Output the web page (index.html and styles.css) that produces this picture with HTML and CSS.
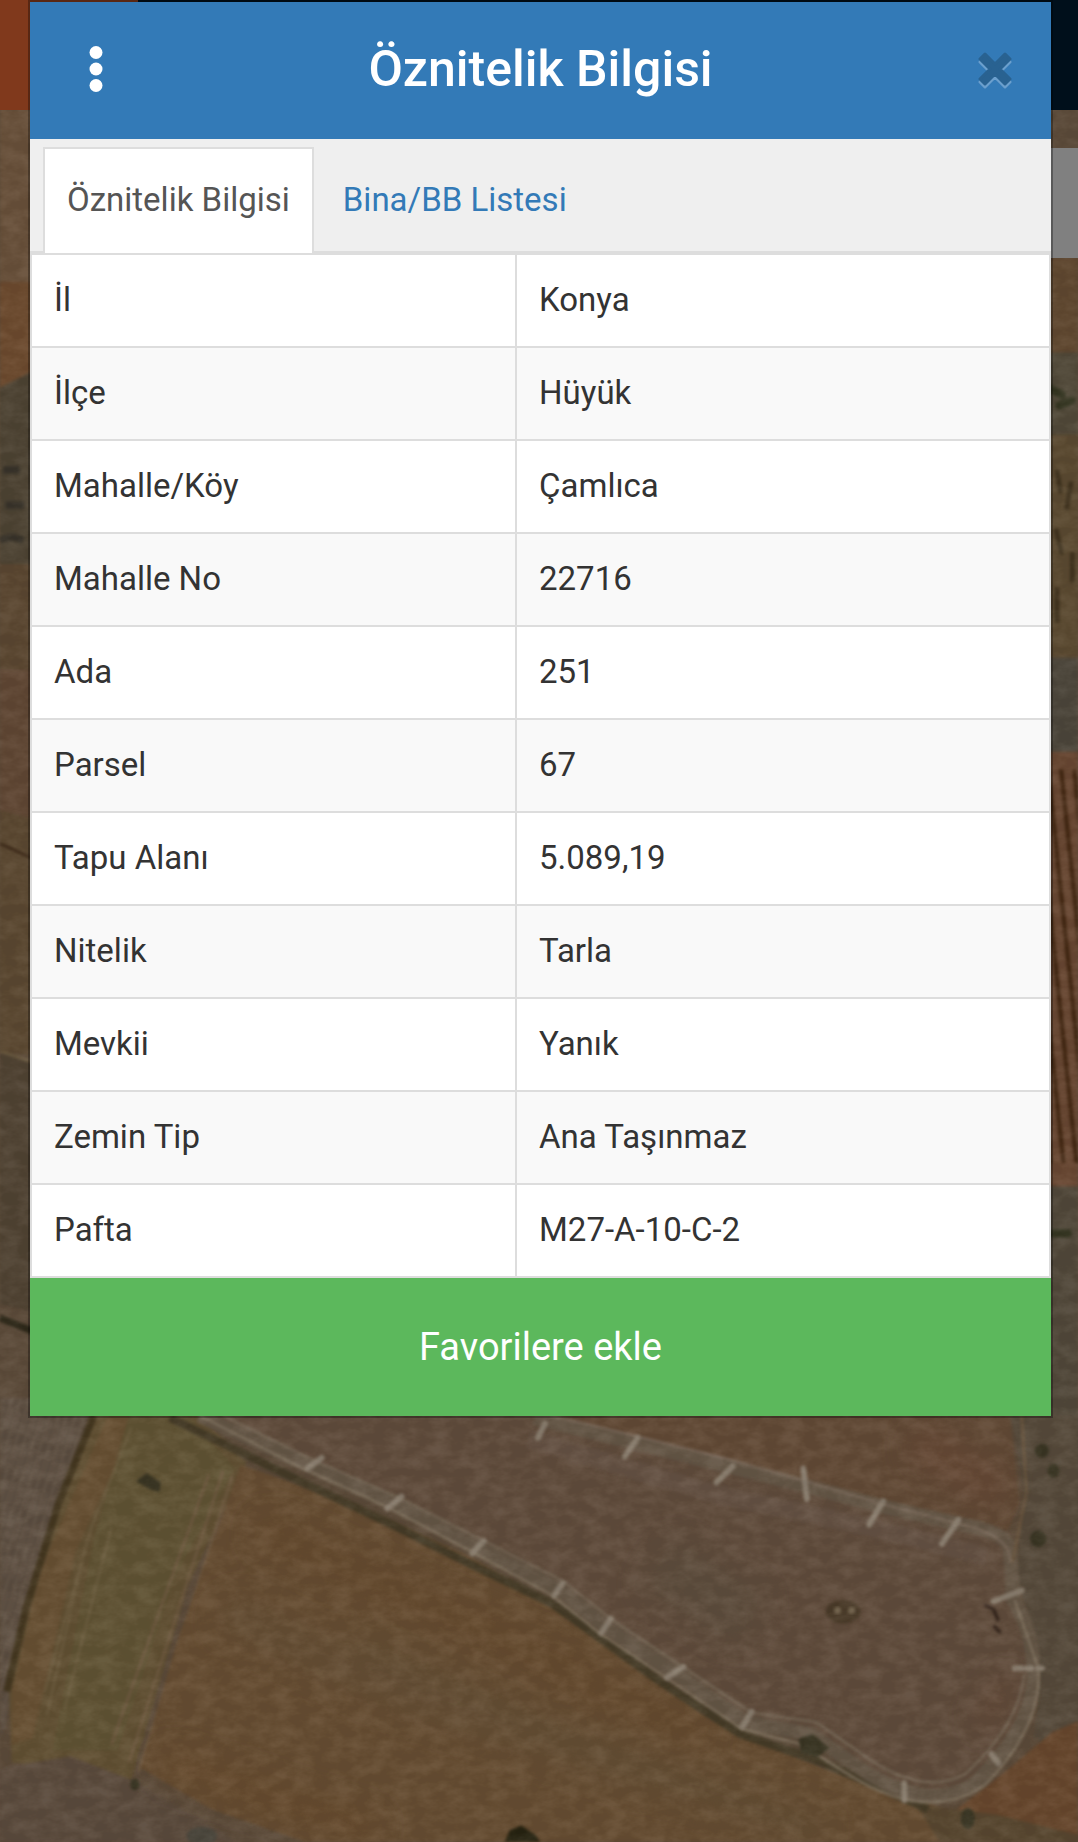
FILE: index.html
```
<!DOCTYPE html>
<html lang="tr">
<head>
    <meta charset="UTF-8">
    <meta name="viewport" content="width=device-width, initial-scale=1.0">
    <title>Öznitelik Bilgisi</title>
    <link rel="stylesheet" href="styles.css">
</head>
<body>

    <!-- Map behind the dialog -->
    <svg class="map" viewBox="0 0 918 1568" preserveAspectRatio="xMidYMid slice" aria-hidden="true">
        <defs>
            <filter id="soft" x="-5%" y="-5%" width="110%" height="110%" color-interpolation-filters="sRGB">
                <feGaussianBlur stdDeviation="1.4"/>
            </filter>
            <filter id="wide" x="-20%" y="-20%" width="140%" height="140%" color-interpolation-filters="sRGB">
                <feGaussianBlur stdDeviation="12"/>
            </filter>
            <filter id="grain" x="0" y="0" width="100%" height="100%" color-interpolation-filters="sRGB">
                <feTurbulence type="fractalNoise" baseFrequency="0.06 0.1" numOctaves="4" seed="4"/>
                <feColorMatrix values="2.4 0 0 0 -0.85  2.4 0 0 0 -0.88  2.4 0 0 0 -0.92  0 0 0 0 0.05"/>
            </filter>
            <pattern id="furrows" width="7" height="30" patternUnits="userSpaceOnUse" patternTransform="rotate(17)">
                <path d="M1 0V30M4 4V22" stroke="#7b6c5b" stroke-width="1" opacity="0.6"/>
            </pattern>
            <pattern id="stripes" width="11" height="40" patternUnits="userSpaceOnUse" patternTransform="rotate(-6)">
                <path d="M5 0V40" stroke="#402510" stroke-width="3.5"/>
            </pattern>
        </defs>

        <rect width="918" height="1568" fill="#5c4b3a"/>

        <!-- west edge -->
        <g filter="url(#soft)">
            <path d="M0 93H40V260L0 270Z" fill="#68503a"/>
            <path d="M0 240H40V310L0 330Z" fill="#6c4a2e"/>
            <path d="M0 330L40 310V570H0Z" fill="#4d4333"/>
            <path d="M0 480H40V570H0Z" fill="#5b4731"/>
            <path d="M0 570H40V700L0 690Z" fill="#604734"/>
            <path d="M0 690L40 700V900L0 895Z" fill="#5b4831"/>
            <path d="M0 895L40 908V1120L0 1110Z" fill="#504333"/>
            <path d="M0 718L40 736" stroke="#392516" stroke-width="2"/>
            <path d="M0 895L40 908" stroke="#716044" stroke-width="2"/>
            <path d="M0 1122L40 1138" stroke="#2d2819" stroke-width="6"/>
            <path d="M0 460q10-5 20 0M5 430h16M3 400h14" stroke="#38332a" stroke-width="6" fill="none"/>
        </g>

        <!-- east edge -->
        <g filter="url(#soft)">
            <path d="M885 219H918V300H885Z" fill="#604830"/>
            <path d="M885 300H918V370H885Z" fill="#514939"/>
            <path d="M885 370H918V560H885Z" fill="#5b4a31"/>
            <path d="M885 560H918V640H885Z" fill="#4c463b"/>
            <path d="M885 640H918V1010H885Z" fill="#684732"/>
            <path d="M885 655H918V990H885Z" fill="url(#stripes)"/>
            <path d="M885 1010H918V1568H885Z" fill="#51483a"/>
            <path d="M892 330l12 6M902 345l10-4M895 1050h14" stroke="#32331f" stroke-width="7" stroke-linecap="round"/>
            <path d="M900 400l3 20M912 410l-4 24M899 450l5 22M913 470v26M900 500v30" stroke="#3f321e" stroke-width="4"/>
        </g>

        <!-- fields below the dialog -->
        <g filter="url(#soft)">
            <path d="M0 1190H82L50 1280L20 1380L5 1470L0 1480Z" fill="#5b4d40"/>
            <path d="M0 1190H82L50 1280L20 1380L5 1470L0 1480Z" fill="url(#furrows)"/>
            <path d="M78 1200H165L210 1245L160 1350L112 1515L10 1500L8 1440L35 1330Z" fill="#615033"/>
            <path d="M92 1205L118 1205L65 1320L28 1480L10 1485L10 1440L35 1335Z" fill="#675033"/>
            <path d="M110 1205L80 1310L45 1490L100 1490L150 1340L200 1250L160 1205Z" fill="#605334"/>
            <path d="M190 1252L110 1500M178 1255L95 1485M198 1256L118 1508" stroke="#715b42" stroke-width="2" fill="none"/>
            <path d="M112 1215L78 1300L38 1440M70 1330L40 1460M95 1300L55 1455" stroke="#766549" stroke-width="2" fill="none" opacity="0.6"/>
            <path d="M80 1205L50 1280L22 1370L6 1440" stroke="#443720" stroke-width="6" fill="none"/>
            <path d="M0 1505L60 1495L112 1515L190 1560L200 1568H0Z" fill="#5b4b3d"/>
            <path d="M205 1247L300 1280L400 1325L500 1385L600 1460L700 1505L820 1545L850 1568H260L180 1540L120 1505L150 1400Z" fill="#664d32"/>
            <path d="M170 1207L262 1247L335 1278L400 1316L475 1352L515 1384L575 1424L635 1468L690 1478L720 1500L770 1524L820 1525L860 1480L880 1430L865 1370L860 1305L690 1268L450 1207Z" fill="#604c3c"/>
            <path d="M450 1205H860L868 1280L858 1303L750 1284L620 1248Z" fill="#624a36"/>
            <path d="M860 1205H918V1475L880 1480L888 1420L865 1340L872 1270Z" fill="#564a3b"/>
            <path d="M918 1465L895 1475L860 1505L815 1540L830 1568H918Z" fill="#67472d"/>
            <path d="M780 1536L850 1545L918 1562V1568H800Z" fill="#584730"/>
        </g>

        <g filter="url(#wide)" opacity="0.5" fill="none">
            <path d="M190 1370L340 1440L560 1510" stroke="#655139" stroke-width="30"/>
            <path d="M220 1300L420 1390L600 1480" stroke="#65482b" stroke-width="26"/>
            <path d="M140 1500L320 1560" stroke="#68492a" stroke-width="24"/>
            <path d="M300 1400L480 1480L700 1560" stroke="#625038" stroke-width="24"/>
            <path d="M560 1330L640 1380" stroke="#5b4f3f" stroke-width="50"/>
            <path d="M780 1225L850 1270" stroke="#6c4836" stroke-width="28"/>
            <path d="M860 1430L835 1470" stroke="#6a4733" stroke-width="14"/>
        </g>

        <!-- dirt roads -->
        <g filter="url(#soft)" fill="none" stroke-linejoin="round">
            <path d="M145 1207L250 1258L330 1296L400 1331L470 1365L560 1430L630 1476L700 1500L790 1540" stroke="#453b27" stroke-width="7"/>
            <path d="M170 1205L262 1247L335 1280L400 1314L475 1352L515 1384L575 1424L635 1466L690 1476L730 1504Q790 1545 830 1518Q880 1470 880 1425Q880 1390 863 1362L860 1320Q858 1304 820 1298L750 1282L690 1266L620 1248L540 1228L455 1207" stroke="#645646" stroke-width="12"/>
            <path d="M170 1205L258 1250L330 1283L400 1320L470 1358L510 1390L570 1430L632 1472L680 1484L725 1512Q790 1552 838 1520Q888 1470 884 1420L864 1362" stroke="#817360" stroke-width="2"/>
            <path d="M190 1205L265 1242L340 1275L405 1308L480 1346L520 1378L580 1418L640 1458L695 1466L735 1494Q785 1530 822 1510Q868 1468 872 1425" stroke="#766857" stroke-width="2"/>
            <path d="M860 1330Q862 1308 820 1298L750 1280L690 1262L620 1242L540 1222L470 1205" stroke="#7b6a5b" stroke-width="2"/>
            <path d="M840 1325L740 1300L610 1272L450 1225" stroke="#675548" stroke-width="16" opacity="0.6"/>
            <path d="M870 1205L874 1270L862 1330" stroke="#6c573f" stroke-width="2"/>
        </g>

        <!-- pylons, bushes and tracks -->
        <g filter="url(#soft)" stroke="#8b7f70" stroke-width="5" stroke-linecap="round" fill="none">
            <path d="M262 1250l12-9M330 1284l12-10M402 1322l10-10M472 1358l7-10M512 1390l8-12M568 1428l14-9M632 1470l8-13M770 1532v-14M844 1493l6 8"/>
            <path d="M458 1224l6-12M532 1240l11-16M610 1262l14-14M684 1250l3 26M740 1298l12-20M802 1314l14-20"/>
            <path d="M864 1420h6M874 1420h4M884 1420h3M846 1363l24-9"/>
        </g>
        <g filter="url(#soft)" fill="#393523">
            <path d="M116 1261l9-7 12 8-1 8-8-2z"/>
            <ellipse cx="887" cy="1235" rx="6" ry="6"/>
            <ellipse cx="897" cy="1252" rx="5" ry="6"/>
            <ellipse cx="884" cy="1310" rx="7" ry="7"/>
            <path d="M680 1480l12-4 14 12-10 8-14-4z"/>
            <ellipse cx="824" cy="1548" rx="6" ry="9"/>
            <path d="M430 1568l4-10 10-4 12 8 4 6z" fill="#262311"/>
            <ellipse cx="172" cy="1563" rx="13" ry="8" fill="#4a463c"/>
            <ellipse cx="115" cy="1519" rx="4" ry="5"/>
            <ellipse cx="718" cy="1372" rx="15" ry="10" fill="#4a3b29"/>
            <path d="M838 1366l8 4 4 10M846 1384l6 6" stroke="#33241b" stroke-width="3" fill="none"/>
        </g>
        <g filter="url(#soft)" fill="#756650">
            <circle cx="713" cy="1371" r="3"/>
            <circle cx="725" cy="1371" r="3"/>
        </g>
        <rect width="918" height="1568" filter="url(#grain)"/>
    </svg>

    <div class="site-header"></div>
    <div class="side-panel"></div>

    <div class="modal" role="dialog" aria-labelledby="modalTitle">
        <div class="modal-header">
            <button type="button" class="icon-button" aria-label="Menü">
                <svg width="14" height="46" viewBox="0 0 14 46" fill="#fff">
                    <circle cx="7" cy="6.5" r="6.5"/>
                    <circle cx="7" cy="23" r="6.5"/>
                    <circle cx="7" cy="39.5" r="6.5"/>
                </svg>
            </button>
            <h1 id="modalTitle">Öznitelik Bilgisi</h1>
            <button type="button" class="icon-button" aria-label="Kapat">
                <svg width="34" height="42" viewBox="0 -4 34 42">
                    <path fill="#6b9fcd" d="M7 5L17 15L27 5L32 10L22 20L32 30L27 35L17 25L7 35L2 30L12 20L2 10Z" stroke="#6b9fcd" stroke-width="3" stroke-linejoin="round"/>
                    <path fill="#296291" d="M7 2L17 12L27 2L32 7L22 17L32 27L27 32L17 22L7 32L2 27L12 17L2 7Z" stroke="#296291" stroke-width="3" stroke-linejoin="round"/>
                </svg>
            </button>
        </div>

        <nav class="tabs">
            <a href="#oznitelik" class="tab active">Öznitelik Bilgisi</a>
            <a href="#bina" class="tab">Bina/BB Listesi</a>
        </nav>

        <table class="info-table" id="oznitelik">
            <tr><th scope="row">İl</th><td>Konya</td></tr>
            <tr><th scope="row">İlçe</th><td>Hüyük</td></tr>
            <tr><th scope="row">Mahalle/Köy</th><td>Çamlıca</td></tr>
            <tr><th scope="row">Mahalle No</th><td>22716</td></tr>
            <tr><th scope="row">Ada</th><td>251</td></tr>
            <tr><th scope="row">Parsel</th><td>67</td></tr>
            <tr><th scope="row">Tapu Alanı</th><td>5.089,19</td></tr>
            <tr><th scope="row">Nitelik</th><td>Tarla</td></tr>
            <tr><th scope="row">Mevkii</th><td>Yanık</td></tr>
            <tr><th scope="row">Zemin Tip</th><td>Ana Taşınmaz</td></tr>
            <tr><th scope="row">Pafta</th><td>M27-A-10-C-2</td></tr>
        </table>

        <button type="button" class="favorite-button">Favorilere ekle</button>
    </div>

</body>
</html>
```
FILE: styles.css
```
* {
    box-sizing: border-box;
}
body {
    font-family: Roboto, "Liberation Sans", sans-serif;
    font-size: 33px;
    line-height: 47px;
    color: #333;
    margin: 0;
    background-color: #5c4b3a;
}
.map {
    position: fixed;
    top: 0;
    left: 0;
    width: 100%;
    height: 100%;
    z-index: -2;
}
.site-header {
    position: fixed;
    top: 0;
    left: 0;
    width: 100%;
    height: 110px;
    background: linear-gradient(to right, #80391c 138px, #000f1b 138px);
    z-index: -1;
}
.side-panel {
    position: fixed;
    top: 148px;
    right: 0;
    width: 60px;
    height: 110px;
    background-color: #808080;
    z-index: -1;
}
.modal {
    margin: 0 25px 0 28px;
    border: 2px solid rgba(0, 0, 0, 0.3);
    background-color: #fff;
    background-clip: padding-box;
}
.modal-header {
    display: flex;
    align-items: center;
    justify-content: space-between;
    height: 137px;
    padding: 0 28px 4px 38px;
    background-color: #337ab7;
    color: #fff;
}
h1 {
    margin: 0;
    font-size: 50px;
    line-height: 56px;
    font-weight: 500;
}
.icon-button {
    display: flex;
    align-items: center;
    justify-content: center;
    width: 56px;
    height: 80px;
    padding: 0;
    border: 0;
    background: none;
    cursor: pointer;
}
.icon-button:first-child {
    margin-right: -10px;
}
.tabs {
    display: flex;
    gap: 5px;
    padding: 8px 13px 0;
    background-color: #efefef;
    border-bottom: 2px solid #ddd;
}
.tab {
    margin-bottom: -2px;
    padding: 27px 22px 30px;
    border: 2px solid transparent;
    border-bottom: 0;
    color: #337ab7;
    text-decoration: none;
}
.tab.active {
    color: #555;
    background-color: #fff;
    border-color: #ddd;
}
.info-table {
    width: 100%;
    border-collapse: collapse;
    table-layout: fixed;
}
.info-table th,
.info-table td {
    padding: 21px 22px 23px;
    border: 2px solid #ddd;
    text-align: left;
    font-weight: normal;
}
.info-table th {
    width: 47.6%;
}
.info-table tr:nth-child(even) {
    background-color: #f9f9f9;
}
.favorite-button {
    display: block;
    width: 100%;
    padding: 42px 20px;
    border: 0;
    background-color: #5cb85c;
    color: #fff;
    font-family: inherit;
    font-size: 38px;
    line-height: 54px;
    cursor: pointer;
}
```
